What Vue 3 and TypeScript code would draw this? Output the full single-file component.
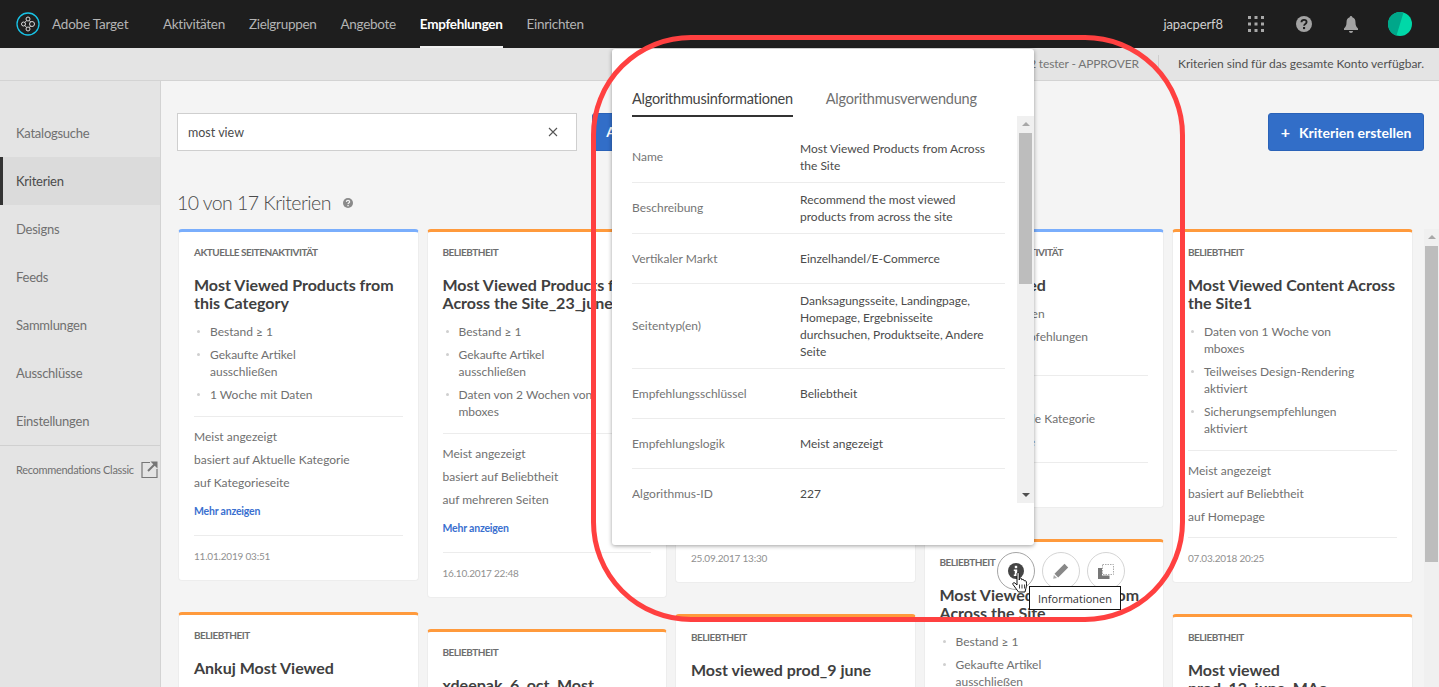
<script setup lang="ts">
interface Card {
  tone: 'blue' | 'orange'
  label: string
  title: string
  bullets: string[]
  meta: string[]
  more?: boolean
  date?: string
  actions?: boolean
}

const nav = ['Aktivitäten', 'Zielgruppen', 'Angebote', 'Empfehlungen', 'Einrichten']
const side = ['Katalogsuche', 'Kriterien', 'Designs', 'Feeds', 'Sammlungen', 'Ausschlüsse', 'Einstellungen']
const pop = [
  ['Name', 'Most Viewed Products from Across the Site'],
  ['Beschreibung', 'Recommend the most viewed products from across the site'],
  ['Vertikaler Markt', 'Einzelhandel/E-Commerce'],
  ['Seitentyp(en)', 'Danksagungsseite, Landingpage, Homepage, Ergebnisseite durchsuchen, Produktseite, Andere Seite'],
  ['Empfehlungsschlüssel', 'Beliebtheit'],
  ['Empfehlungslogik', 'Meist angezeigt'],
  ['Algorithmus-ID', '227'],
]
const B = 'BELIEBTHEIT'
const A = 'AKTUELLE SEITENAKTIVITÄT'
const columns: Card[][] = [
  [
    { tone: 'blue', label: A, title: 'Most Viewed Products from this Category', bullets: ['Bestand ≥ 1', 'Gekaufte Artikel ausschließen', '1 Woche mit Daten'], meta: ['Meist angezeigt', 'basiert auf Aktuelle Kategorie', 'auf Kategorieseite'], more: true, date: '11.01.2019 03:51' },
    { tone: 'orange', label: B, title: 'Ankuj Most Viewed', bullets: ['Bestand ≥ 1'], meta: [] },
  ],
  [
    { tone: 'orange', label: B, title: 'Most Viewed Products from Across the Site_23_june', bullets: ['Bestand ≥ 1', 'Gekaufte Artikel ausschließen', 'Daten von 2 Wochen von mboxes'], meta: ['Meist angezeigt', 'basiert auf Beliebtheit', 'auf mehreren Seiten'], more: true, date: '16.10.2017 22:48' },
    { tone: 'orange', label: B, title: 'xdeepak_6_oct_Most Viewed', bullets: ['Bestand ≥ 1'], meta: [] },
  ],
  [
    { tone: 'orange', label: B, title: 'Most Viewed Content Across the Site', bullets: ['Daten von 1 Woche von mboxes', 'Teilweises Design-Rendering aktiviert', 'Sicherungsempfehlungen aktiviert'], meta: ['Meist angezeigt', 'basiert auf Beliebtheit', 'auf Homepage'], date: '25.09.2017 13:30' },
    { tone: 'orange', label: B, title: 'Most viewed prod_9 june', bullets: ['Bestand ≥ 1'], meta: [] },
  ],
  [
    { tone: 'blue', label: A, title: 'Mostly Viewed', bullets: ['2 Wochen Daten', 'Sicherungsempfehlungen aktiviert'], meta: ['Meist angezeigt', 'basiert auf Aktuelle Kategorie', 'auf Kategorieseite'], date: '02.05.2018 10:12' },
    { tone: 'orange', label: B, title: 'Most Viewed Products from Across the Site', bullets: ['Bestand ≥ 1', 'Gekaufte Artikel ausschließen'], meta: [], actions: true },
  ],
  [
    { tone: 'orange', label: B, title: 'Most Viewed Content Across the Site1', bullets: ['Daten von 1 Woche von mboxes', 'Teilweises Design-Rendering aktiviert', 'Sicherungsempfehlungen aktiviert'], meta: ['Meist angezeigt', 'basiert auf Beliebtheit', 'auf Homepage'], date: '07.03.2018 20:25' },
    { tone: 'orange', label: B, title: 'Most viewed prod_12_june_MAc', bullets: ['Bestand ≥ 1'], meta: [] },
  ],
]
</script>

<template>
  <div class="app">
    <header class="top">
      <svg class="logo" width="24" height="24" viewBox="0 0 24 24" fill="none">
        <circle cx="12" cy="12" r="11" stroke="#19c3e6" stroke-width="1.300" />
        <g stroke="#d8d8d8" stroke-width="1">
          <circle cx="12" cy="7" r="2" />
          <circle cx="12" cy="17" r="2" />
          <circle cx="7.500" cy="12" r="2" />
          <circle cx="16" cy="12" r="2.500" />
          <path d="M10.500 8.500 9 10.500M13.500 8.500l1 1.500M10.500 15.500 9 13.500M13.500 15.500l1-1.500" />
        </g>
      </svg>
      <span class="brand">Adobe Target</span>
      <nav class="nav">
        <a v-for="n in nav" :key="n" :class="{ on: n === 'Empfehlungen' }">{{ n }}</a>
      </nav>
      <span class="user">japacperf8</span>
      <svg class="i-grid" width="16" height="16" viewBox="0 0 16 16" fill="#a8a8a8">
        <template v-for="y in [0, 6.5, 13]" :key="y">
          <rect v-for="x in [0, 6.5, 13]" :key="x" :x="x" :y="y" width="3" height="3" />
        </template>
      </svg>
      <svg class="i-help" width="16" height="16" viewBox="0 0 16 16">
        <circle cx="8" cy="8" r="8" fill="#a3a3a3" />
        <path d="M5.400 6.200C5.500 4.600 6.600 3.800 8 3.800c1.500 0 2.600.9 2.600 2.200 0 1-.6 1.500-1.300 2-.7.5-1.200.9-1.200 1.700" fill="none" stroke="#1e1e1e" stroke-width="1.800" />
        <rect x="7" y="11" width="2.100" height="2.100" fill="#1e1e1e" />
      </svg>
      <svg class="i-bell" width="14" height="17" viewBox="0 0 14 17" fill="#a3a3a3">
        <path d="M7 0c.8 0 1.300.6 1.300 1.300C10.500 2 11.500 3.800 11.500 6.500c0 3 .8 4.500 2.500 6V14H0v-1.500c1.700-1.500 2.500-3 2.500-6C2.500 3.800 3.500 2 5.700 1.300 5.700.6 6.200 0 7 0z" />
        <path d="M5 15h4c0 1.200-.9 2-2 2s-2-.8-2-2z" />
      </svg>
      <svg class="i-avatar" width="24" height="24" viewBox="0 0 24 24">
        <circle cx="12" cy="12" r="12" fill="#00d8a8" />
        <path d="M15.500.5A12 12 0 1 0 8.500 23.500z" fill="#00a78a" />
      </svg>
    </header>

    <div class="sub">
      <span class="sub-role">Arbeitsbereich japacperf Umgebung 2 tester - APPROVER</span>
      <span class="sub-sep"></span>
      <span class="sub-note">Kriterien sind für das gesamte Konto verfügbar.</span>
    </div>

    <div class="body">
      <aside class="side">
        <div class="side-list">
          <a v-for="s in side" :key="s" class="side-item" :class="{ on: s === 'Kriterien' }">{{ s }}</a>
        </div>
        <a class="classic">
          <span>Recommendations Classic</span>
          <svg width="17" height="18" viewBox="0 0 17 18" fill="none" stroke="#777">
            <path d="M9 2.500H1v15h15V9" stroke-width="1.200" />
            <path d="M7 11l7-7" stroke-width="2" />
            <path d="M9.500 1.500H16.500V8.500z" fill="#777" stroke="none" />
          </svg>
        </a>
      </aside>

      <main class="main">
        <div class="tools">
          <div class="search">
            <span>most view</span>
            <svg width="10" height="10" viewBox="0 0 10 10" stroke="#555" stroke-width="1.100"><path d="M1 1l8 8M9 1l-8 8" /></svg>
          </div>
          <button class="btn apply">Anwenden</button>
          <button class="btn create"><span class="plus">+</span>Kriterien erstellen</button>
        </div>

        <h1 class="head">
          10 von 17 Kriterien
          <svg width="10" height="10" viewBox="0 0 16 16">
            <circle cx="8" cy="8" r="8" fill="#8a8a8a" />
            <path d="M5.400 6.200C5.500 4.600 6.600 3.800 8 3.800c1.500 0 2.600.9 2.600 2.200 0 1-.6 1.500-1.300 2-.7.5-1.200.9-1.200 1.700" fill="none" stroke="#f4f4f4" stroke-width="2" />
            <rect x="7" y="11" width="2.200" height="2.200" fill="#f4f4f4" />
          </svg>
        </h1>

        <div class="scroller">
          <div class="grid">
            <div v-for="(col, i) in columns" :key="i" class="col">
              <article v-for="c in col" :key="c.title" class="card" :class="c.tone">
                <div class="label">{{ c.label }}</div>
                <h2 class="title">{{ c.title }}</h2>
                <ul class="bul">
                  <li v-for="b in c.bullets" :key="b">{{ b }}</li>
                </ul>
                <div v-if="c.meta.length" class="meta">
                  <p v-for="m in c.meta" :key="m">{{ m }}</p>
                  <a v-if="c.more" class="more">Mehr anzeigen</a>
                </div>
                <div v-if="c.date" class="foot">{{ c.date }}</div>

                <div v-if="c.actions" class="acts">
                  <span class="act hot">
                    <svg width="16" height="16" viewBox="0 0 16 16">
                      <circle cx="8" cy="8" r="8" fill="#444" />
                      <rect x="6.800" y="2.800" width="2.400" height="2.400" fill="#fff" />
                      <path d="M5.800 6.500h3.400v5h1v1.500H5.800v-1.500h1V8h-1z" fill="#fff" />
                    </svg>
                  </span>
                  <span class="act">
                    <svg width="16" height="16" viewBox="0 0 16 16" fill="#888">
                      <path d="M11.500.8l3.700 3.700L5.200 14.500 1.500 10.800z" />
                      <path d="M.9 11.900l3.200 3.200-3.900.7z" fill="#aaa" />
                    </svg>
                  </span>
                  <span class="act">
                    <svg width="16" height="16" viewBox="0 0 16 16">
                      <rect x="4.500" y="1.500" width="11" height="10" fill="#fff" stroke="#aaa" stroke-dasharray="1.500 1" />
                      <path d="M0 5h4v7.500h7.500V16H0z" fill="#777" />
                    </svg>
                  </span>
                </div>
              </article>
            </div>
          </div>
          <div class="vbar">
            <i class="up"></i>
            <b></b>
          </div>
        </div>
      </main>
    </div>

    <section class="pop">
      <div class="tabs">
        <span class="tab on">Algorithmusinformationen</span>
        <span class="tab">Algorithmusverwendung</span>
      </div>
      <div class="pop-body">
        <div class="rows">
          <div v-for="r in pop" :key="r[0]" class="row">
            <span class="k">{{ r[0] }}</span>
            <span class="v">{{ r[1] }}</span>
          </div>
        </div>
        <div class="pbar">
          <i class="up"></i>
          <b></b>
          <i class="down"></i>
        </div>
      </div>
    </section>

    <div class="ring"></div>

    <svg class="hand" width="17" height="21" viewBox="0 0 17 21">
      <path d="M5 1.500c0-1.300 2.200-1.300 2.200 0V8l.3-1.300c.5-.9 2-.7 2.200.3l.1.9c.5-.8 2-.6 2.200.4l.1.700c.6-.7 2-.4 2.200.6.400 2 .2 5-.4 6.700L13 20H6.500L1 12.500c-.8-1.200.8-2.500 2-1.400L5 13z" fill="#fff" stroke="#111" stroke-width="1" />
      <path d="M7.500 12.500v4M10 12.500v4M12.500 12.500v4" stroke="#111" stroke-width=".8" />
    </svg>
    <div class="tip">Informationen</div>
  </div>
</template>

<style>
html, body { margin: 0; overflow: hidden; background: #f4f4f4; }
</style>

<style scoped>
.app {
  position: relative;
  height: 687px;
  display: flex;
  flex-direction: column;
  overflow: hidden;
  font-family: Lato, "Open Sans", sans-serif;
  font-size: 12px;
  color: #6e6e6e;
  background: #f4f4f4;
}
* { box-sizing: border-box; }

.top {
  flex: none;
  height: 48px;
  display: flex;
  align-items: center;
  background: #1e1e1e;
  padding-left: 16px;
  color: #b4b4b4;
  font-size: 13.500px;
  letter-spacing: -.3px;
}
.brand { margin-left: 12px; width: 111px; letter-spacing: -.2px; }
.nav { display: flex; gap: 24px; height: 48px; flex: 1; }
.nav a { line-height: 48px; box-sizing: border-box; }
.nav a.on { color: #fff; font-weight: 700; border-bottom: 2px solid #f0f0f0; }
.user { color: #d0d0d0; font-size: 13px; letter-spacing: -.1px; }
.i-grid { margin-left: 25px; }
.i-help { margin-left: 32px; }
.i-bell { margin-left: 32px; }
.i-avatar { margin: 0 27px 0 30px; }

.sub {
  flex: none;
  height: 33px;
  display: flex;
  align-items: center;
  justify-content: flex-end;
  background: #e4e4e4;
  border-bottom: 1px solid #d3d3d3;
  padding: 0 15px 2px 0;
  font-size: 12px;
}
.sub-role { color: #757575; letter-spacing: -.15px; }
.sub-sep { width: 1px; height: 17px; background: #cfcfcf; margin: 0 19px; }
.sub-note { color: #505050; letter-spacing: -.04px; }

.body { flex: 1; min-height: 0; display: flex; }
.side {
  flex: none;
  width: 161px;
  background: #e4e4e4;
  border-right: 1px solid #d3d3d3;
  padding-top: 28px;
}
.side-list { border-bottom: 1px solid #d0d0d0; }
.side-item {
  display: block;
  height: 48px;
  line-height: 48px;
  padding-left: 16px;
  font-size: 13px;
  letter-spacing: -.25px;
  color: #707070;
}
.side-item.on {
  background: #dbdbdb;
  border-left: 3px solid #333;
  padding-left: 13px;
  color: #4b4b4b;
}
.classic {
  display: flex;
  align-items: center;
  justify-content: space-between;
  padding: 14px 2px 0 16px;
  font-size: 11px;
  letter-spacing: -.3px;
  color: #707070;
}

.main { flex: 1; min-width: 0; display: flex; flex-direction: column; padding: 32px 0 0 16px; }
.tools { flex: none; display: flex; height: 38px; padding-right: 15px; }
.search {
  width: 400px;
  display: flex;
  align-items: center;
  justify-content: space-between;
  padding: 0 18px 0 10px;
  background: #fff;
  border: 1px solid #cfcfcf;
  font-size: 12.500px;
  color: #4b4b4b;
}
.btn {
  border: 1px solid #2a62b8;
  background: #326ec8;
  color: #fff;
  border-radius: 3px;
  font-family: inherit;
  font-weight: 700;
  font-size: 14px;
  padding: 0 0 2px;
}
.apply { margin-left: 15px; width: 96px; }
.create { margin-left: auto; width: 156px; }
.plus { margin-right: 9px; font-size: 16px; font-weight: 700; }

.head {
  flex: none;
  margin: 38px 0 0;
  height: 28px;
  line-height: 28px;
  font-size: 19.500px;
  letter-spacing: -.55px;
  font-weight: 300;
  color: #4b4b4b;
  display: flex;
  align-items: center;
  gap: 12px;
}
.scroller { flex: 1; min-height: 0; margin-top: 12px; display: flex; justify-content: space-between; }
.grid {
  width: 1234.5px;
  margin-left: 1px;
  display: grid;
  grid-template-columns: repeat(5, 1fr);
  gap: 8px;
  align-items: start;
}
.card {
  position: relative;
  background: #fff;
  border: 1px solid #ededed;
  border-top: 3px solid;
  border-radius: 4px;
  padding: 13px 15px 17px;
  margin-bottom: 31px;
}
.card.blue { border-top-color: #7aaefc; }
.card.orange { border-top-color: #ff9a3c; }
.label { font-size: 10px; line-height: 14px; font-weight: 700; letter-spacing: -.5px; color: #6e6e6e; }
.title {
  margin: 17px 0 0;
  font-size: 16px;
  line-height: 18px;
  font-weight: 700;
  color: #404040;
}
.col:nth-child(4) .card:first-child .title { margin-bottom: 1px; }
.bul { list-style: none; margin: 11px 0 0; padding: 0 40px 0 0; }
.bul li { position: relative; padding-left: 16px; line-height: 17px; color: #707070; }
.bul li + li { margin-top: 6px; }
.bul li::before {
  content: '';
  position: absolute;
  left: 3px;
  top: 7px;
  width: 3px;
  height: 3px;
  border-radius: 50%;
  background: #cfcfcf;
}
.meta { margin-top: 13px; border-top: 1px solid #ececec; padding-top: 11px; color: #707070; }
.meta p { margin: 0 0 6px; line-height: 17px; }
.meta p:last-of-type { margin-bottom: 0; }
.more { display: block; margin-top: 13px; padding-bottom: 5px; line-height: 14px; font-size: 10.500px; letter-spacing: -.2px; font-weight: 700; color: #3a70d0; }
.foot { margin-top: 12px; border-top: 1px solid #ececec; padding-top: 13px; line-height: 14px; font-size: 10px; letter-spacing: -.2px; color: #909090; }

.acts { position: absolute; left: 72px; top: 10px; display: flex; gap: 7px; }
.act {
  width: 38px;
  height: 38px;
  border-radius: 50%;
  background: #fff;
  border: 1px solid #d5d5d5;
  display: flex;
  align-items: center;
  justify-content: center;
}
.act.hot { border-color: #a5a5a5; }

.vbar {
  position: relative;
  flex: none;
  width: 15px;
  background: #f0f0f0;
}
.vbar b { position: absolute; left: 1px; right: 1px; top: 17px; height: 316px; background: #bdbdbd; }
.up, .down {
  position: absolute;
  left: 50%;
  margin-left: -4px;
  width: 0;
  height: 0;
  border-left: 4px solid transparent;
  border-right: 4px solid transparent;
}
.up { top: 6px; border-bottom: 4px solid #a8a8a8; }
.down { bottom: 6px; border-top: 4px solid #505050; }

.pop {
  position: absolute;
  left: 612px;
  top: 49px;
  width: 422px;
  height: 496px;
  background: #fff;
  border-radius: 3px;
  box-shadow: 0 1px 4px rgba(0, 0, 0, .38);
  overflow: hidden;
}
.tabs { display: flex; gap: 33px; padding: 40px 0 0 20px; height: 68px; }
.tab { font-size: 14.500px; letter-spacing: -.25px; line-height: 20px; height: 28px; color: #707070; }
.tab.on { color: #444; border-bottom: 2px solid #333; }
.pop-body { display: flex; height: 387px; margin-top: -1px; padding-left: 20px; }
.rows { width: 373px; padding-top: 16px; overflow: hidden; }
.row {
  display: grid;
  grid-template-columns: 168px 1fr;
  align-items: center;
  min-height: 50px;
  padding: 8px 0;
  border-bottom: 1px solid #ececec;
  line-height: 17px;
}
.k { color: #757575; margin-top: -1px; }
.v { color: #4b4b4b; padding-right: 15px; }
.pbar {
  position: relative;
  margin-left: 12px;
  width: 17px;
  background: #f0f0f0;
}
.pbar b { position: absolute; left: 2px; right: 2px; top: 17px; height: 151px; background: #bdbdbd; }

.ring {
  position: absolute;
  left: 591px;
  top: 35px;
  width: 594px;
  height: 587px;
  border: 5px solid #ff4040;
  border-radius: 100px;
  pointer-events: none;
}
.hand { position: absolute; left: 1012px; top: 572px; }
.tip {
  position: absolute;
  left: 1029px;
  top: 586px;
  width: 92px;
  height: 24px;
  line-height: 24px;
  text-align: center;
  background: #fff;
  border: 1px solid #111;
  font-family: "Open Sans", sans-serif;
  font-size: 11px;
  color: #333;
}
</style>
